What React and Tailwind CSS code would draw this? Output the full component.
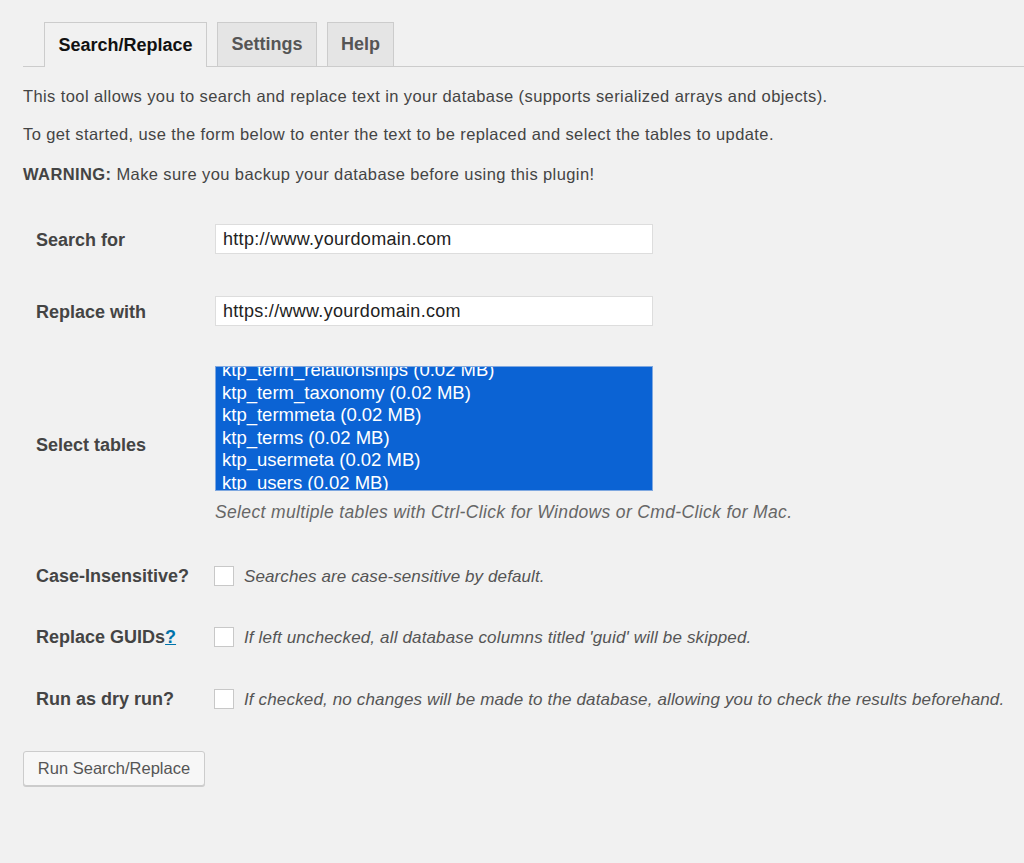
export default function App() {
  const tables = ["ktp_term_relationships (0.02 MB)","ktp_term_taxonomy (0.02 MB)","ktp_termmeta (0.02 MB)","ktp_terms (0.02 MB)","ktp_usermeta (0.02 MB)","ktp_users (0.02 MB)"];
  const Check = () => <div className="w-[20px] h-[20px] bg-white border border-[#c8c8c8] shrink-0" />;
  return (
    <div className="w-[1024px] h-[863px] bg-[#f1f1f1] text-[#444] overflow-hidden" style={{fontFamily:'"Liberation Sans", Arial, sans-serif'}}>
      <div className="pt-[22px] pl-[23px]">
        <div className="flex items-end gap-[10px] border-b border-[#cccccc] pl-[21px] h-[45px]">
          <div className="h-[45px] w-[163px] flex items-center justify-center border border-[#cccccc] border-b-0 bg-[#f1f1f1] mb-[-1px] text-[18px] font-bold text-[#111]">Search/Replace</div>
          <div className="h-[44px] w-[100px] flex items-center justify-center border border-[#cccccc] border-b-0 bg-[#e5e5e5] text-[18px] font-bold text-[#555]">Settings</div>
          <div className="h-[44px] w-[67px] flex items-center justify-center border border-[#cccccc] border-b-0 bg-[#e5e5e5] text-[18px] font-bold text-[#555]">Help</div>
        </div>
        <p className="text-[16.5px] tracking-[0.4px] mt-[19px] leading-[20px]">This tool allows you to search and replace text in your database (supports serialized arrays and objects).</p>
        <p className="text-[16.5px] tracking-[0.4px] mt-[18px] leading-[20px]">To get started, use the form below to enter the text to be replaced and select the tables to update.</p>
        <p className="text-[16.5px] tracking-[0.4px] mt-[20px] leading-[20px]"><b>WARNING:</b> Make sure you backup your database before using this plugin!</p>
        <div className="pl-[13px] text-[18px]">
          <div className="flex items-center mt-[40px] h-[30px]">
            <div className="w-[179px] font-bold pt-[2px]">Search for</div>
            <div className="w-[438px] h-[30px] bg-white border border-[#dddddd] flex items-center px-[7px] text-[18px] tracking-[0.3px] text-[#222]">http://www.yourdomain.com</div>
          </div>
          <div className="flex items-center mt-[42px] h-[30px]">
            <div className="w-[179px] font-bold pt-[2px]">Replace with</div>
            <div className="w-[438px] h-[30px] bg-white border border-[#dddddd] flex items-center px-[7px] text-[18px] tracking-[0.3px] text-[#222]">https://www.yourdomain.com</div>
          </div>
          <div className="flex items-center mt-[40px]">
            <div className="w-[179px] font-bold pt-[34px]">Select tables</div>
            <div className="w-[438px] h-[125px] bg-[#0b63d4] border border-[#7fa8e0] overflow-hidden pl-[6px] text-white text-[18.5px]">
              <div className="mt-[-8px]">
                {tables.map(t => <div key={t} className="leading-[22.5px]">{t}</div>)}
              </div>
            </div>
          </div>
          <div className="pl-[179px] mt-[8px] italic text-[17.5px] tracking-[0.35px] text-[#666]">Select multiple tables with Ctrl-Click for Windows or Cmd-Click for Mac.</div>
          <div className="flex items-center mt-[40px] h-[22px]">
            <div className="w-[178px] font-bold">Case-Insensitive?</div>
            <Check />
            <div className="ml-[10px] italic text-[17px] tracking-[0.1px] text-[#555]">Searches are case-sensitive by default.</div>
          </div>
          <div className="flex items-center mt-[39px] h-[22px]">
            <div className="w-[178px] font-bold">Replace GUIDs<a className="text-[#0073aa] underline">?</a></div>
            <Check />
            <div className="ml-[10px] italic text-[17px] tracking-[0.15px] text-[#555]">If left unchecked, all database columns titled 'guid' will be skipped.</div>
          </div>
          <div className="flex items-center mt-[40px] h-[22px]">
            <div className="w-[178px] font-bold">Run as dry run?</div>
            <Check />
            <div className="ml-[10px] italic text-[17px] tracking-[0.15px] text-[#555] whitespace-nowrap">If checked, no changes will be made to the database, allowing you to check the results beforehand.</div>
          </div>
        </div>
        <button className="mt-[41px] w-[182px] h-[35px] bg-[#f7f7f7] border border-[#cccccc] rounded-[3px] shadow-[0_1px_0_#ccc] text-[16.5px] text-[#555]">Run Search/Replace</button>
      </div>
    </div>
  );
}
